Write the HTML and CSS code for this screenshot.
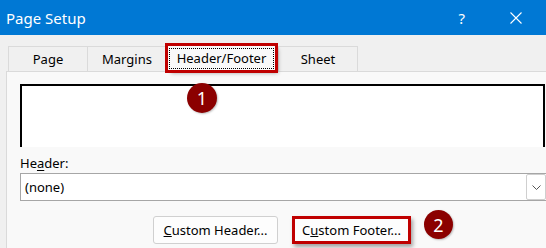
FILE: index.html
```html
<!DOCTYPE html>
<html>
<head>
<meta charset="utf-8">
<link rel="stylesheet" href="styles.css">
</head>
<body>
<div class="win">
  <div class="titlebar">
    <span class="title">Page Setup</span>
    <span class="help">?</span>
    <svg class="close" width="12" height="12" viewBox="0 0 12 12"><path d="M0.5 0.5L11.5 11.5M11.5 0.5L0.5 11.5" stroke="#fff" stroke-width="1.1" fill="none"/></svg>
  </div>
  <div class="body">
    <div class="tabs">
      <div class="tab t-page">Page</div>
      <div class="tab t-margins">Margins</div>
      <div class="tab sel"><span class="focus">Header/Footer</span></div>
      <div class="tab t-sheet">Sheet</div>
    </div>
    <div class="panel">
      <div class="preview"></div>
      <div class="lbl">He<u>a</u>der:</div>
      <div class="combo">
        <span class="val">(none)</span>
        <div class="drop"><svg width="9" height="5" viewBox="0 0 9 5"><path d="M0.5 0.5L4.5 4.5L8.5 0.5" stroke="#555" stroke-width="1" fill="none"/></svg></div>
      </div>
      <div class="btns">
        <button class="btn"><u>C</u>ustom Header...</button>
        <button class="btn mark">C<u>u</u>stom Footer...</button>
      </div>
    </div>
  </div>
  <div class="badge b1">1</div>
  <div class="badge b2">2</div>
</div>
</body>
</html>
```
FILE: styles.css
```css
html, body {
  margin: 0;
  padding: 0;
}
body {
  width: 546px;
  height: 248px;
  overflow: hidden;
  font-family: "Noto Sans", "Open Sans", sans-serif;
  font-size: 13px;
  color: #000;
  background: #f0f0f0;
}
.win {
  position: relative;
  width: 546px;
  height: 248px;
  overflow: hidden;
}
.titlebar {
  height: 35px;
  background: #0078d4;
  color: #fff;
  display: flex;
  align-items: center;
}
.title {
  padding-left: 6px;
  font-size: 15px;
  line-height: 20px;
}
.help {
  margin-left: auto;
  font-size: 15px;
  line-height: 20px;
}
.close {
  margin-left: 45px;
  margin-right: 24px;
}
.body {
  padding-left: 6px;
}
.tabs {
  display: flex;
  align-items: flex-end;
  padding-top: 11px;
  padding-left: 2px;
  height: 25px;
}
.tab {
  box-sizing: border-box;
  height: 25px;
  width: 80px;
  border: 1px solid #dadada;
  border-bottom: 0;
  margin-right: -1px;
  background: #f0f0f0;
  display: flex;
  align-items: center;
  justify-content: center;
  font-size: 13px;
  line-height: 18px;
}
.tab.sel {
  position: relative;
  z-index: 2;
  width: 107px;
  height: 24px;
  margin: 0 3px 1px 2px;
  background: #f9f9f9;
  border: 0;
  outline: 3px solid #c00000;
  box-shadow: 3px 3px 4px rgba(0,0,0,0.35);
}
.focus {
  box-sizing: border-box;
  width: 105px;
  height: 21px;
  border: 1px dotted #000;
  display: flex;
  align-items: center;
  justify-content: center;
}
.panel {
  border-top: 1px solid #dadada;
  border-left: 1px solid #dadada;
  background: #f9f9f9;
  height: 200px;
  padding-top: 12px;
}
.preview {
  box-sizing: border-box;
  margin-left: 13px;
  width: 525px;
  height: 63px;
  background: #fff;
  border: 2px solid #000;
  border-bottom: 0;
}
.lbl {
  margin-left: 13px;
  margin-top: 7px;
  line-height: 18px;
  height: 19px;
}
.lbl u {
  text-underline-offset: 2px;
}
.combo {
  box-sizing: border-box;
  margin-left: 13px;
  width: 527px;
  height: 28px;
  border: 1px solid #a6a6a6;
  background: #fff;
  display: flex;
  align-items: center;
}
.val {
  padding-left: 4px;
  line-height: 18px;
}
.drop {
  box-sizing: border-box;
  margin-left: auto;
  width: 20px;
  height: 26px;
  border: 1px solid #cfcfcf;
  border-radius: 2px;
  display: flex;
  align-items: center;
  justify-content: center;
}
.btns {
  display: flex;
  gap: 14px;
  padding-left: 146px;
  margin-top: 15px;
}
.btn {
  box-sizing: border-box;
  width: 125px;
  height: 28px;
  font-family: "Noto Sans", "Open Sans", sans-serif;
  font-size: 13px;
  color: #000;
  background: #fdfdfd;
  border: 1px solid #d0d0d0;
  border-radius: 3px;
  padding: 0;
}
.btn.mark {
  width: 119px;
  border: 3px solid #c00000;
  border-radius: 0;
  box-shadow: 2px 3px 4px rgba(0,0,0,0.35);
}
.badge {
  position: absolute;
  border-radius: 50%;
  background: #8b0000;
  color: #fff;
  display: flex;
  align-items: center;
  justify-content: center;
  font-size: 18px;
  box-shadow: 1px 1px 2px rgba(0,0,0,0.25);
}
.b1 {
  left: 187px;
  top: 83px;
  width: 30px;
  height: 30px;
}
.b2 {
  left: 424px;
  top: 210px;
  width: 29px;
  height: 29px;
}
```
